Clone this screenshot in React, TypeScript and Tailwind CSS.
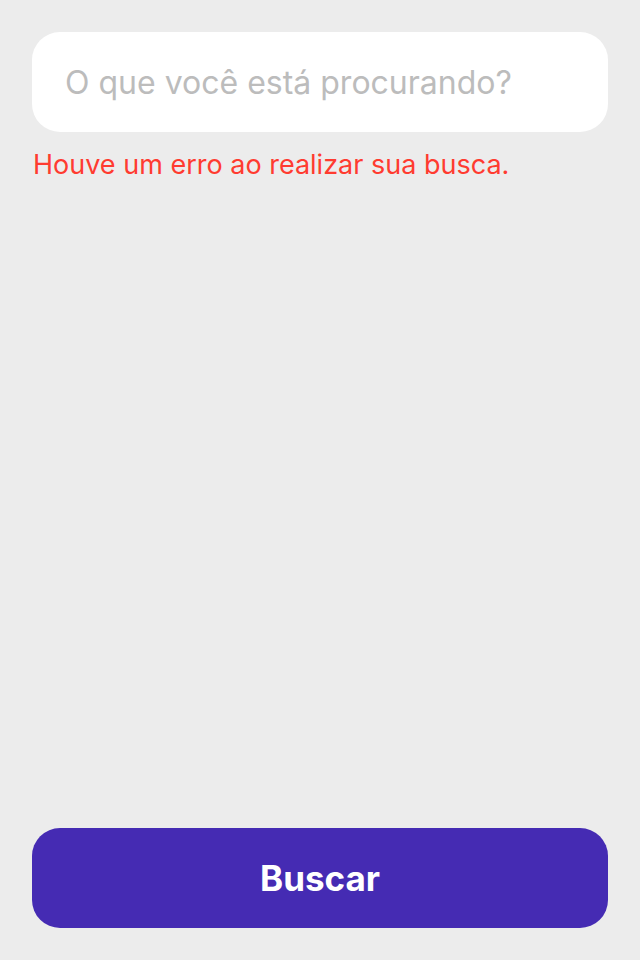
export default function App() {
  return (
    <div
      className="flex h-[960px] w-[640px] flex-col bg-[#ececec] p-8"
      style={{ fontFamily: 'Inter, "Noto Sans", sans-serif' }}
    >
      <input
        type="text"
        placeholder="O que você está procurando?"
        className="h-[100px] w-full rounded-[28px] bg-white px-[33px] text-[32px] text-gray-900 outline-none placeholder:text-[#bcbcbc]"
      />
      <p className="mt-[17px] pl-px text-[27px] leading-[32px] text-[#ff3b30]">
        Houve um erro ao realizar sua busca.
      </p>
      <div className="flex-1" />
      <button
        type="button"
        className="h-[100px] w-full rounded-[28px] bg-[#452bb3] text-[35px] font-bold text-white"
      >
        Buscar
      </button>
    </div>
  )
}
